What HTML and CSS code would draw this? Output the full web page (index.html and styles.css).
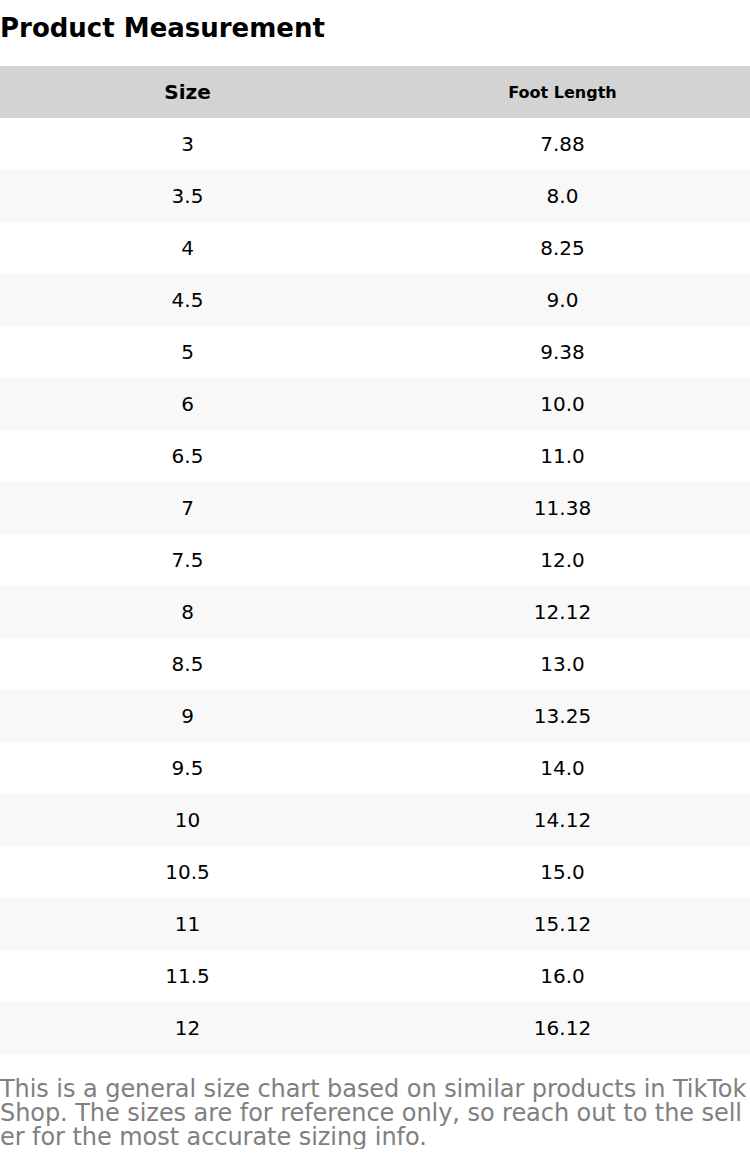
FILE: index.html
```html
<!DOCTYPE html>
<html>
<head>
<meta charset="utf-8">
<link rel="stylesheet" href="styles.css">
</head>
<body>
<h1 class="title">Product Measurement</h1>
<table class="chart">
  <thead>
    <tr><th class="h-size">Size</th><th class="h-len">Foot Length</th></tr>
  </thead>
  <tbody>
    <tr><td>3</td><td>7.88</td></tr>
    <tr><td>3.5</td><td>8.0</td></tr>
    <tr><td>4</td><td>8.25</td></tr>
    <tr><td>4.5</td><td>9.0</td></tr>
    <tr><td>5</td><td>9.38</td></tr>
    <tr><td>6</td><td>10.0</td></tr>
    <tr><td>6.5</td><td>11.0</td></tr>
    <tr><td>7</td><td>11.38</td></tr>
    <tr><td>7.5</td><td>12.0</td></tr>
    <tr><td>8</td><td>12.12</td></tr>
    <tr><td>8.5</td><td>13.0</td></tr>
    <tr><td>9</td><td>13.25</td></tr>
    <tr><td>9.5</td><td>14.0</td></tr>
    <tr><td>10</td><td>14.12</td></tr>
    <tr><td>10.5</td><td>15.0</td></tr>
    <tr><td>11</td><td>15.12</td></tr>
    <tr><td>11.5</td><td>16.0</td></tr>
    <tr><td>12</td><td>16.12</td></tr>
  </tbody>
</table>
<p class="note">This is a general size chart based on similar products in TikTok Shop. The sizes are for reference only, so reach out to the seller for the most accurate sizing info.</p>
</body>
</html>
```
FILE: styles.css
```css
html, body {
  margin: 0;
  padding: 0;
  background: #ffffff;
  font-family: "DejaVu Sans", sans-serif;
  color: #000;
}
.title {
  margin: 0;
  height: 66px;
  padding-top: 12px;
  box-sizing: border-box;
  font-size: 26px;
  line-height: 32px;
  font-weight: bold;
}
.chart {
  width: 750px;
  border-collapse: collapse;
  table-layout: fixed;
}
.chart th, .chart td {
  height: 52px;
  padding: 0;
  text-align: center;
  vertical-align: middle;
  width: 50%;
}
.chart thead tr {
  background: #d3d3d3;
}
.h-size {
  font-size: 20px;
  font-weight: bold;
}
.h-len {
  font-size: 16px;
  font-weight: bold;
}
.chart td {
  font-size: 20px;
}
.chart tbody tr:nth-child(even) {
  background: #f8f8f8;
}
.note {
  margin: 23px 0 0 0;
  font-size: 24px;
  line-height: 24px;
  letter-spacing: -0.06px;
  color: #808080;
  word-break: break-all;
}
```
